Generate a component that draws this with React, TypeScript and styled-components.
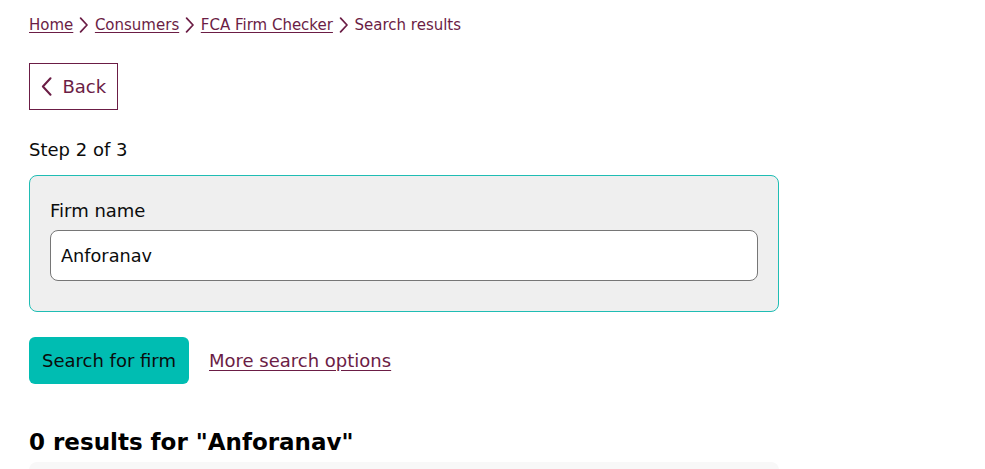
import styled, { createGlobalStyle } from "styled-components";

const GlobalStyle = createGlobalStyle`
  body {
    margin: 0;
    background: #ffffff;
    font-family: "DejaVu Sans", Verdana, sans-serif;
    color: #0b0c0c;
  }
`;

const crumbs = [
  { label: "Home", link: true },
  { label: "Consumers", link: true },
  { label: "FCA Firm Checker", link: true },
  { label: "Search results", link: false },
];

function Chevron({ dir = "right", size = 16 }: { dir?: "left" | "right"; size?: number }) {
  return (
    <svg width={size * 0.6} height={size} viewBox="0 0 9 15" fill="none">
      <path
        d={dir === "right" ? "M1.5 1 L7.5 7.5 L1.5 14" : "M7.5 1 L1.5 7.5 L7.5 14"}
        stroke="#6b1d45"
        strokeWidth="1.6"
        strokeLinecap="round"
        strokeLinejoin="round"
      />
    </svg>
  );
}

export default function App() {
  return (
    <>
      <GlobalStyle />
      <Style.Page>
        <Style.Breadcrumb>
          {crumbs.map((c, i) => (
            <Style.Crumb key={c.label}>
              {i > 0 && <Chevron />}
              {c.link ? <a href="#">{c.label}</a> : <span>{c.label}</span>}
            </Style.Crumb>
          ))}
        </Style.Breadcrumb>

        <Style.BackButton type="button">
          <Chevron dir="left" size={19} />
          Back
        </Style.BackButton>

        <Style.Step>Step 2 of 3</Style.Step>

        <Style.Fieldset>
          <label htmlFor="firm">Firm name</label>
          <input id="firm" defaultValue="Anforanav" />
        </Style.Fieldset>

        <Style.Actions>
          <Style.Primary type="button">Search for firm</Style.Primary>
          <a href="#">More search options</a>
        </Style.Actions>

        <Style.Heading>0 results for "Anforanav"</Style.Heading>
        <Style.ResultCard />
      </Style.Page>
    </>
  );
}

const Style = {
  Page: styled.main`
    width: 750px;
    padding: 14px 0 0 29px;
    display: flex;
    flex-direction: column;
    align-items: flex-start;
  `,
  Breadcrumb: styled.nav`
    display: flex;
    align-items: center;
    gap: 6px;
    font-size: 15px;
    line-height: 22px;
    color: #6b1d45;
  `,
  Crumb: styled.span`
    display: flex;
    align-items: center;
    gap: 6px;

    a {
      color: #6b1d45;
      text-decoration: underline;
      text-underline-offset: 2px;
    }
  `,
  BackButton: styled.button`
    margin-top: 27px;
    height: 47px;
    padding: 0 11px 0 11px;
    display: flex;
    align-items: center;
    gap: 10px;
    background: #ffffff;
    border: 1px solid #6b1d45;
    border-radius: 0;
    font-family: inherit;
    font-size: 18px;
    color: #6b1d45;
  `,
  Step: styled.p`
    margin: 29px 0 0;
    font-size: 18px;
    line-height: 22px;
  `,
  Fieldset: styled.div`
    box-sizing: border-box;
    margin-top: 14px;
    width: 750px;
    height: 137px;
    padding: 24px 20px 0;
    display: flex;
    flex-direction: column;
    gap: 8px;
    background: #efefef;
    border: 1px solid #1fbdb4;
    border-radius: 8px;

    label {
      font-size: 18px;
      line-height: 22px;
    }

    input {
      box-sizing: border-box;
      height: 51px;
      width: 100%;
      padding: 0 10px;
      border: 1px solid #767676;
      border-radius: 8px;
      background: #ffffff;
      font-family: inherit;
      font-size: 17.7px;
      color: #0b0c0c;
      outline: none;
    }
  `,
  Actions: styled.div`
    margin-top: 25px;
    display: flex;
    align-items: center;
    gap: 20px;

    a {
      font-size: 18px;
      color: #6b1d45;
      text-decoration: underline;
      text-underline-offset: 3px;
    }
  `,
  Primary: styled.button`
    height: 47px;
    padding: 0 13px;
    background: #00bdb2;
    border: none;
    border-radius: 6px;
    font-family: inherit;
    font-size: 18px;
    color: #0b0c0c;
  `,
  Heading: styled.h2`
    margin: 44px 0 0;
    font-size: 23px;
    line-height: 28px;
    font-weight: bold;
    color: #000000;
  `,
  ResultCard: styled.div`
    margin-top: 6px;
    width: 750px;
    height: 80px;
    background: #f8f8f8;
    border-radius: 8px;
  `,
};
